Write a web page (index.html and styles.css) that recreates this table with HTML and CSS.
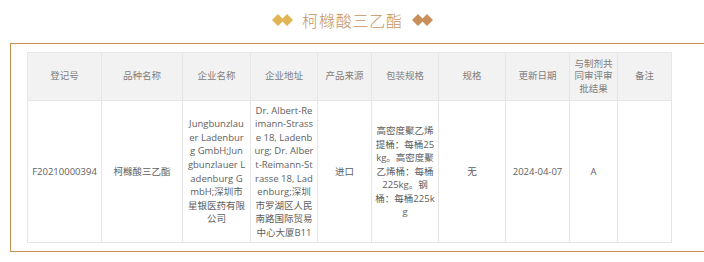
FILE: index.html
```html
<!DOCTYPE html>
<html lang="zh-CN">
<head>
<meta charset="utf-8">
<title>柯橼酸三乙酯</title>
<link rel="stylesheet" href="styles.css">
</head>
<body>
<div class="title">
  <svg class="dia" width="21" height="12" viewBox="0 0 21 12"><path d="M0 6L6 0L10.5 4.5L15 0L21 6L15 12L10.5 7.5L6 12Z" fill="#e1b553"/></svg>
  <h1 class="title-text">柯橼酸三乙酯</h1>
  <svg class="dia" width="21" height="12" viewBox="0 0 21 12"><path d="M0 6L6 0L10.5 4.5L15 0L21 6L15 12L10.5 7.5L6 12Z" fill="#c88f5b"/></svg>
</div>
<div class="box">
  <table class="grid">
    <colgroup>
      <col style="width:74px"><col style="width:81px"><col style="width:68px"><col style="width:67px"><col style="width:54px"><col style="width:67px"><col style="width:67px"><col style="width:64px"><col style="width:48px"><col style="width:54px">
    </colgroup>
    <thead>
      <tr>
        <th>登记号</th><th>品种名称</th><th>企业名称</th><th>企业地址</th><th>产品来源</th><th>包装规格</th><th>规格</th><th>更新日期</th><th>与制剂共同审评审批结果</th><th>备注</th>
      </tr>
    </thead>
    <tbody>
      <tr>
        <td>F20210000394</td>
        <td>柯橼酸三乙酯</td>
        <td class="lines">Jungbunzlau<br>er Ladenbur<br>g GmbH;Jun<br>gbunzlauer L<br>adenburg G<br>mbH;深圳市<br>星银医药有限<br>公司</td>
        <td class="lines">Dr. Albert-Re<br>imann-Strass<br>e 18, Ladenb<br>urg; Dr. Alber<br>t-Reimann-St<br>rasse 18, Lad<br>enburg;深圳<br>市罗湖区人民<br>南路国际贸易<br>中心大厦B11</td>
        <td>进口</td>
        <td class="lines">高密度聚乙烯<br>提桶：每桶25<br>kg。高密度聚<br>乙烯桶：每桶<br>225kg。钢<br>桶：每桶225k<br>g</td>
        <td>无</td>
        <td>2024-04-07</td>
        <td>A</td>
        <td></td>
      </tr>
    </tbody>
  </table>
</div>
</body>
</html>
```
FILE: styles.css
```css
html, body {
  margin: 0;
  padding: 0;
  background: #ffffff;
}
body {
  font-family: "Open Sans", "Noto Sans CJK SC", sans-serif;
}
.title {
  height: 39px;
  display: flex;
  align-items: center;
  justify-content: center;
  gap: 9px;
  padding-left: 1px;
}
.dia {
  display: block;
  flex: none;
}
.title-text {
  margin: 0;
  font-family: "Noto Sans CJK SC", sans-serif;
  font-size: 16px;
  font-weight: 300;
  letter-spacing: 0.8px;
  line-height: 20px;
  color: #c6935f;
}
.box {
  margin: 4px 0 0 10px;
  width: 675px;
  border: 1px solid #c98f52;
  padding: 8px 15px 8px 16px;
}
.grid {
  width: 644px;
  table-layout: fixed;
  border-collapse: collapse;
  font-size: 9.5px;
}
.grid th,
.grid td {
  border: 1px solid #e6e6e6;
  text-align: center;
  vertical-align: middle;
  word-break: break-all;
  overflow-wrap: anywhere;
}
.grid th {
  background: #f2f2f2;
  color: #808080;
  font-weight: 400;
  line-height: 12.5px;
  height: 47px;
  padding: 0 4px;
}
.grid td {
  color: #606060;
  line-height: 13.6px;
  height: 141px;
  padding: 0 4px;
}
.grid td.lines {
  white-space: nowrap;
  padding: 0 2px;
}
```
